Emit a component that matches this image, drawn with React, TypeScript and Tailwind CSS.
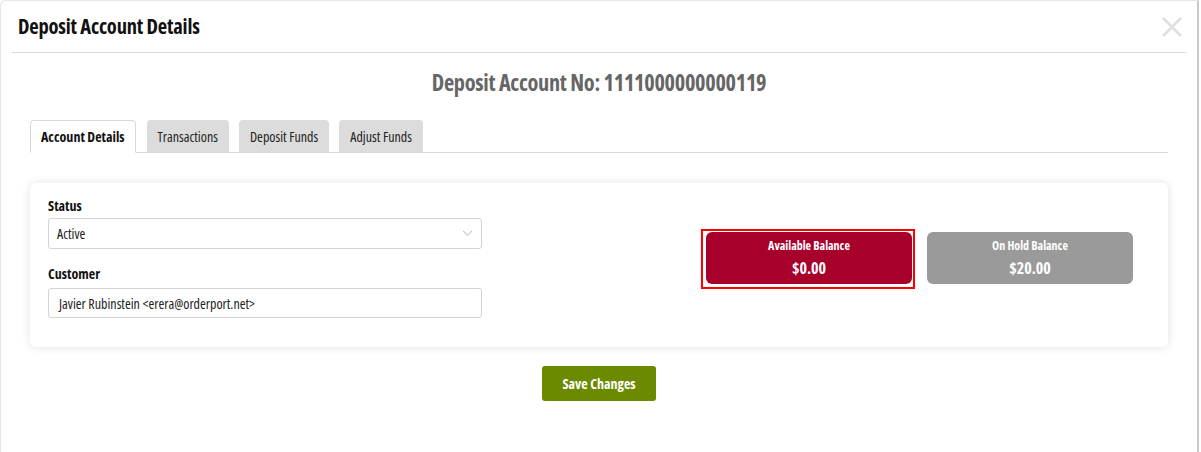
import * as React from 'react';

const tabs = ['Account Details', 'Transactions', 'Deposit Funds', 'Adjust Funds'];

export default function App() {
  const [active, setActive] = React.useState(0);

  return (
    <div
      className="w-[1201px] h-[452px] bg-white overflow-hidden"
      style={{ fontFamily: '"Open Sans", "Noto Sans", sans-serif', fontStretch: '75%' }}
    >
      <div className="h-full w-[1199px] border-r-2 border-[#c8c8c8] rounded-tl-md border-l border-t border-l-[#e5e5e5] border-t-[#e5e5e5] flex flex-col">
        {/* Header */}
        <div className="mx-[11px] h-[52px] border-b border-[#d9d9d9] flex items-center justify-between pl-[6px] pr-[3px]">
          <h2 className="text-[20.5px] font-bold text-[#111] tracking-[-0.2px]">Deposit Account Details</h2>
          <button className="text-[#e0e0e0] w-[22px] h-[22px] flex items-center justify-center">
            <svg viewBox="0 0 20 20" className="w-[20px] h-[20px]" stroke="currentColor" strokeWidth="2.8" strokeLinecap="square">
              <path d="M2 2 L18 18 M18 2 L2 18" />
            </svg>
          </button>
        </div>

        <div className="px-[29px]">
          <h1 className="text-center text-[22.3px] font-bold text-[#666] mt-[14px] leading-[32px] tracking-[-0.3px]">
            Deposit Account No: 1111000000000119
          </h1>

          {/* Tabs */}
          <div className="mt-[21px] flex items-end gap-[10px] border-b border-[#d9d9d9]">
            {tabs.map((t, i) => (
              <button
                key={t}
                onClick={() => setActive(i)}
                className={
                  i === active
                    ? 'h-[33px] -mb-px px-[10px] mr-px bg-white border border-[#d9d9d9] border-b-white rounded-t-[4px] text-[14px] font-bold text-[#111]'
                    : 'h-[32px] px-[11px] bg-[#dcdcdc] rounded-t-[4px] text-[14px] font-medium text-[#222]'
                }
              >
                {t}
              </button>
            ))}
          </div>

          {/* Card */}
          <div className="mt-[30px] bg-white rounded-[6px] shadow-[0_0_10px_rgba(0,0,0,0.12)] h-[164px] flex px-[18px] pt-[13px]">
            <div className="w-[434px] flex flex-col">
              <label className="text-[14px] font-bold text-[#111] leading-[19px]">Status</label>
              <div className="mt-[3px] h-[31px] border border-[#d4d4d4] rounded-[3px] flex items-center justify-between pl-[8px] pr-[8px]">
                <span className="text-[14px] text-[#222]">Active</span>
                <svg viewBox="0 0 12 8" className="w-[11px] h-[7px]" fill="none" stroke="#c4c4c4" strokeWidth="1.2">
                  <path d="M1 1 L6 6 L11 1" />
                </svg>
              </div>
              <label className="mt-[15px] text-[14px] font-bold text-[#111] leading-[19px]">Customer</label>
              <div className="mt-[5px] h-[30px] border border-[#d4d4d4] rounded-[3px] flex items-center pl-[10px]">
                <span className="text-[14px] text-[#222]">Javier Rubinstein &lt;erera@orderport.net&gt;</span>
              </div>
            </div>

            <div className="flex-1 flex items-start pl-[219px] pt-[36px] gap-[12px]">
              <div className="border-2 border-[#ff0000] pl-[3px] pr-[1px] pt-[1px] pb-[3px] -mt-[3px]">
                <div className="w-[206px] h-[52px] bg-[#a6002b] rounded-[6px] flex flex-col items-center justify-center text-white">
                  <span className="text-[12px] font-bold leading-[16px]">Available Balance</span>
                  <span className="text-[16px] font-bold leading-[22px] mt-[3px]">$0.00</span>
                </div>
              </div>
              <div className="w-[206px] h-[52px] bg-[#9a9a9a] rounded-[6px] flex flex-col items-center justify-center text-white">
                <span className="text-[12px] font-bold leading-[16px]">On Hold Balance</span>
                <span className="text-[16px] font-bold leading-[22px] mt-[3px]">$20.00</span>
              </div>
            </div>
          </div>

          <div className="flex justify-center mt-[19px]">
            <button className="w-[114px] h-[35px] bg-[#6b8a00] rounded-[3px] text-white text-[14px] font-bold">
              Save Changes
            </button>
          </div>
        </div>
      </div>
    </div>
  );
}
